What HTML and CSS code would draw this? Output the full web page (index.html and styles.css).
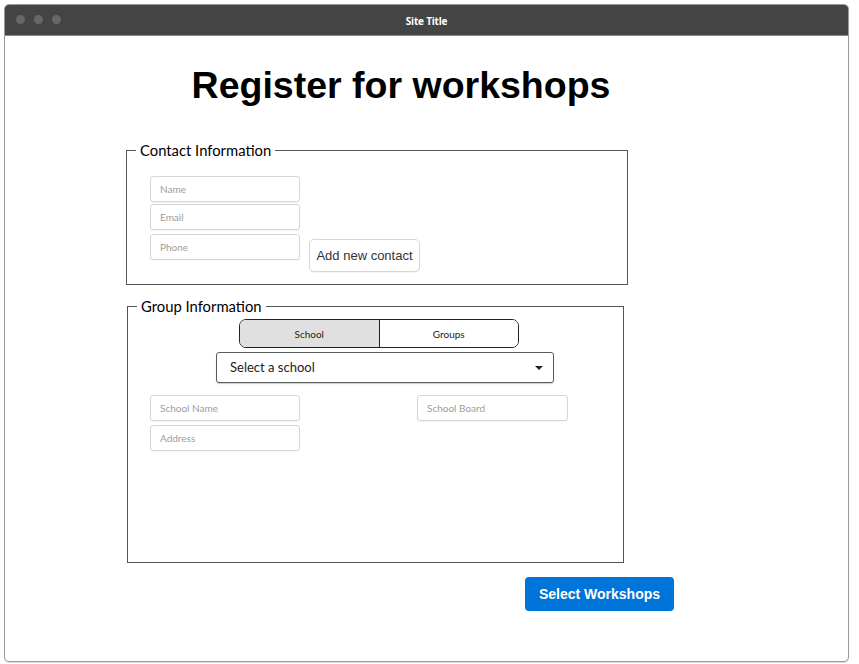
FILE: index.html
```html
<!DOCTYPE html>
<html>
<head>
<meta charset="utf-8">
<title>Register for workshops</title>
<link rel="stylesheet" href="styles.css">
</head>
<body>
<div class="window">
  <div class="titlebar">
    <div class="dots"><span class="dot"></span><span class="dot"></span><span class="dot"></span></div>
    <div class="site-title">Site Title</div>
  </div>
  <div class="column">
    <h1 class="heading">Register for workshops</h1>

    <fieldset class="fs fs-contact">
      <legend class="legend">Contact Information</legend>
      <div class="fs-body contact-body">
        <div class="stack">
          <input class="field" type="text" placeholder="Name">
          <input class="field field-email" type="text" placeholder="Email">
          <input class="field field-phone" type="text" placeholder="Phone">
        </div>
        <button class="btn-add" type="button">Add new contact</button>
      </div>
    </fieldset>

    <fieldset class="fs fs-group">
      <legend class="legend">Group Information</legend>
      <div class="fs-body group-body">
        <div class="segmented">
          <div class="seg seg-active">School</div>
          <div class="seg">Groups</div>
        </div>
        <div class="select">
          <span class="select-text">Select a school</span>
          <svg class="caret" width="8" height="4" viewBox="0 0 8 4"><path d="M0 0h8L4 4z" fill="#222"/></svg>
        </div>
        <div class="school-row">
          <div class="stack">
            <input class="field" type="text" placeholder="School Name">
            <input class="field field-address" type="text" placeholder="Address">
          </div>
          <input class="field field-board" type="text" placeholder="School Board">
        </div>
      </div>
    </fieldset>

    <button class="btn-primary" type="button">Select Workshops</button>
  </div>
</div>
</body>
</html>
```

FILE: styles.css
```css
html, body {
  margin: 0;
  padding: 0;
  background: #fff;
}

body {
  font-family: "Lato", "Liberation Sans", sans-serif;
  padding: 4px 10px 2px 4px;
}

.window {
  box-sizing: border-box;
  width: 845px;
  height: 658px;
  border: 1px solid #9a9a9a;
  border-radius: 5px;
  overflow: hidden;
  background: #fff;
  display: flex;
  flex-direction: column;
  box-shadow: 0 1px 1px rgba(0,0,0,0.15);
}

.titlebar {
  position: relative;
  height: 30px;
  background: #444;
  border-bottom: 1px solid #8a8a8a;
  display: flex;
  align-items: center;
  justify-content: center;
  flex-shrink: 0;
}

.dots {
  position: absolute;
  left: 11px;
  top: 10px;
  display: flex;
  gap: 9px;
}

.dot {
  width: 9px;
  height: 9px;
  border-radius: 50%;
  background: #676767;
}

.site-title {
  color: #fff;
  font-family: "Open Sans", "Liberation Sans", sans-serif;
  font-weight: 700;
  font-size: 10px;
  letter-spacing: -0.2px;
  margin-top: 1px;
}

.column {
  margin-left: 121px;
  width: 550px;
  display: flex;
  flex-direction: column;
}

.heading {
  margin: 28px 0 35px 0;
  text-align: center;
  font-family: "Liberation Sans", Arial, sans-serif;
  font-weight: 700;
  font-size: 37.5px;
  line-height: 42px;
  color: #000;
}

.fs {
  margin: 0;
  padding: 0;
  border: 1px solid #555;
  min-width: 0;
  box-sizing: border-box;
}

.legend {
  margin-left: 9px;
  padding: 0 4px;
  font-family: "Lato", "Liberation Sans", sans-serif;
  font-size: 14.8px;
  line-height: 18px;
  color: #000;
}

.fs-contact {
  width: 502px;
}

.contact-body {
  display: flex;
  align-items: flex-start;
  padding: 17px 0 12px 23px;
}

.stack {
  display: flex;
  flex-direction: column;
}

.field {
  box-sizing: border-box;
  width: 150px;
  height: 26px;
  margin: 0;
  padding: 0 9px;
  border: 1px solid #d6d6d6;
  border-radius: 3px;
  font-family: "Lato", "Liberation Sans", sans-serif;
  font-size: 10px;
  color: #333;
  background: #fff;
  outline: none;
  box-shadow: 0 1px 1px rgba(0,0,0,0.04);
}

.field::placeholder {
  color: #9d9d9d;
}

.field-email {
  margin-top: 2px;
}

.field-phone {
  margin-top: 4px;
}

.btn-add {
  box-sizing: border-box;
  margin: 63px 0 0 9px;
  width: 111px;
  height: 33px;
  padding: 0;
  border: 1px solid #d6d6d6;
  border-radius: 5px;
  background: #fff;
  font-family: "Liberation Sans", Arial, sans-serif;
  font-size: 13px;
  color: #333;
  box-shadow: 0 1px 1px rgba(0,0,0,0.05);
}

.fs-group {
  width: 497px;
  margin: 12px 0 0 1px;
}

.group-body {
  box-sizing: border-box;
  height: 247px;
  padding-top: 4px;
  display: flex;
  flex-direction: column;
  align-items: flex-start;
}

.segmented {
  box-sizing: border-box;
  margin-left: 111px;
  width: 280px;
  height: 29px;
  display: flex;
  border: 1px solid #222;
  border-radius: 7px;
  overflow: hidden;
}

.seg {
  flex: 1;
  display: flex;
  align-items: center;
  justify-content: center;
  font-family: "Lato", "Liberation Sans", sans-serif;
  font-size: 10px;
  color: #222;
  background: #fff;
}

.seg-active {
  background: #e0e0e0;
  border-right: 1px solid #222;
}

.select {
  box-sizing: border-box;
  margin: 4px 0 0 88px;
  width: 338px;
  height: 31px;
  border: 1px solid #5a5a5a;
  border-radius: 3px;
  display: flex;
  align-items: center;
  justify-content: space-between;
  padding: 0 10px 0 13px;
  box-shadow: 0 1px 1px rgba(0,0,0,0.2);
}

.select-text {
  font-family: "Lato", "Liberation Sans", sans-serif;
  font-size: 13px;
  color: #222;
  margin-top: -1px;
}

.caret {
  margin-top: 1px;
}

.school-row {
  margin-top: 12px;
  padding-left: 22px;
  display: flex;
  align-items: flex-start;
}

.field-address {
  margin-top: 4px;
}

.field-board {
  margin-left: 117px;
  width: 151px;
}

.btn-primary {
  align-self: flex-end;
  margin: 14px 2px 0 0;
  box-sizing: border-box;
  width: 149px;
  height: 34px;
  padding: 0;
  border: none;
  border-radius: 4px;
  background: #0074d9;
  color: #fff;
  font-family: "Liberation Sans", Arial, sans-serif;
  font-weight: 700;
  font-size: 14px;
}
```
